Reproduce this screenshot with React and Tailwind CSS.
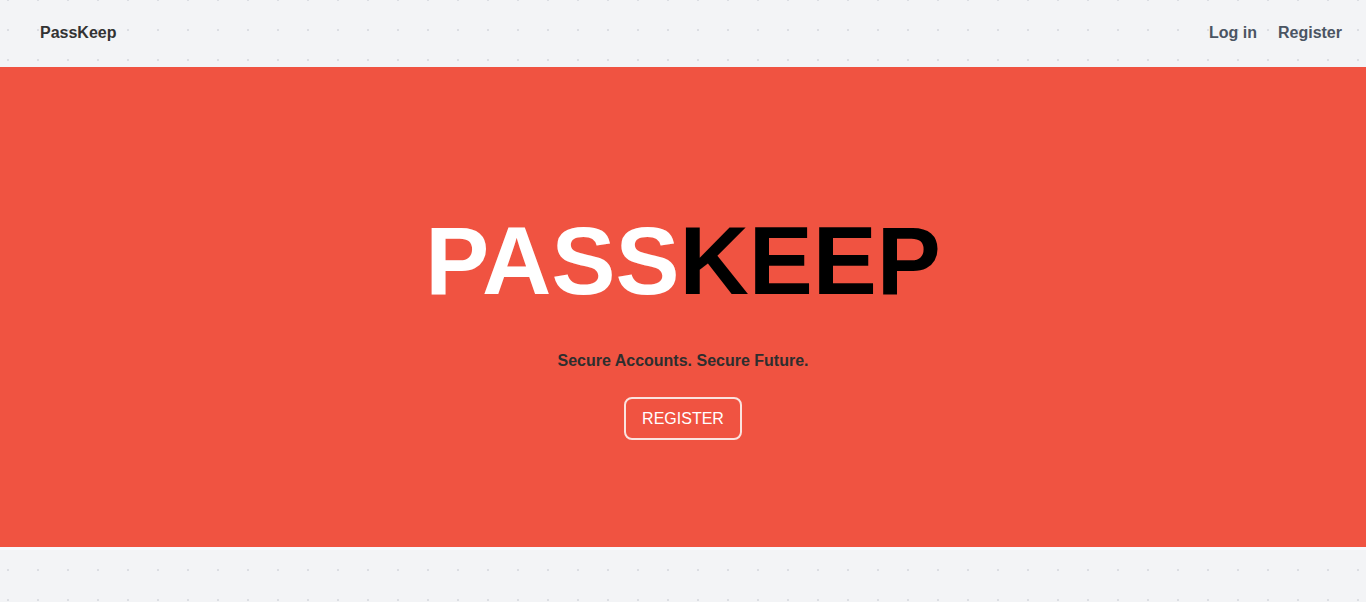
import React from 'react';

// Landing page: header, red hero band, dotted page background
const App = () => {
  return (
    <div
      className="min-h-screen bg-[#f3f4f6] bg-[radial-gradient(circle,#dcdee3_1px,transparent_1.5px)] bg-[length:30px_30px] bg-[position:-7px_-15px] font-['Liberation_Sans',Arial,sans-serif]"
    >
      {/* Header */}
      <header className="h-[67px] flex items-center justify-between pl-10 pr-6 pb-[2px]">
        <span className="text-base font-bold text-[#333333]">PassKeep</span>
        <nav className="flex items-center gap-[21px] text-base font-bold text-[#4b5563]">
          <a href="#">Log in</a>
          <a href="#">Register</a>
        </nav>
      </header>

      {/* Hero */}
      <section className="h-[480px] bg-[#f05341] flex flex-col items-center pt-[146px]">
        <h1 className="text-8xl leading-none font-bold">
          <span className="text-white">PASS</span>
          <span className="text-black">KEEP</span>
        </h1>
        <p className="mt-[40px] text-base leading-6 font-bold text-[#2e2e2e]">
          Secure Accounts. Secure Future.
        </p>
        <button className="mt-6 h-[43px] px-4 border-2 border-[#fbe3df] rounded-lg text-base leading-6 text-white">
          REGISTER
        </button>
      </section>

      <div className="h-[3px] bg-[#f8f8fc]"></div>
    </div>
  );
};

export default App;
